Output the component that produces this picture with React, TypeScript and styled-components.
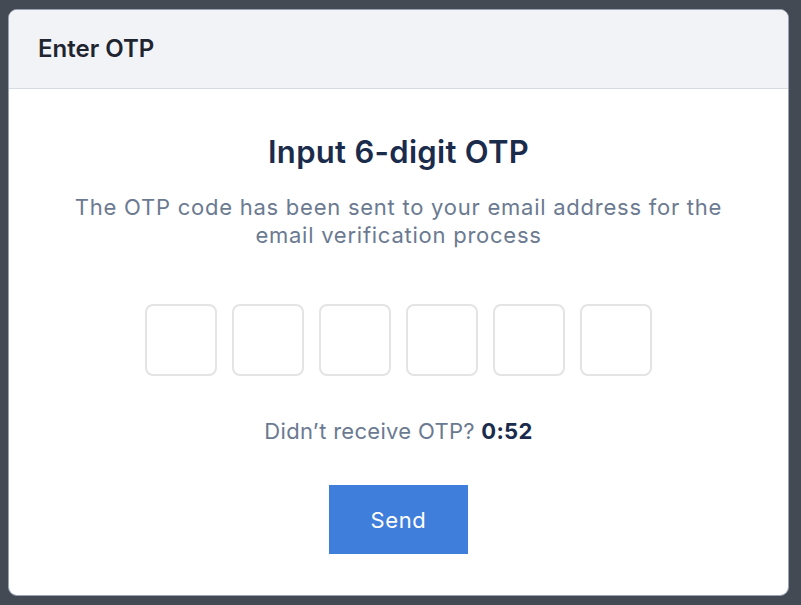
import React from "react";
import styled, { createGlobalStyle } from "styled-components";

const Global = createGlobalStyle`
  html, body { margin: 0; padding: 0; background: #434a54; }
  body { font-family: "Inter", "Noto Sans", sans-serif; }
  * { box-sizing: border-box; }
`;

const Page = styled.div`
  width: 801px;
  height: 605px;
  padding: 9px 12px 9px 8px;
  background: #434a54;
`;

const Card = styled.div`
  width: 781px;
  height: 587px;
  background: #ffffff;
  border: 1px solid #9aa3b3;
  border-radius: 9px;
  overflow: hidden;
  display: flex;
  flex-direction: column;
`;

const Header = styled.div`
  height: 79px;
  flex: none;
  background: #f2f3f7;
  border-bottom: 1px solid #d6dae1;
  display: flex;
  align-items: center;
  padding-left: 29px;
`;

const HeaderTitle = styled.h2`
  margin: 0;
  font-size: 24px;
  line-height: 30px;
  font-weight: 600;
  color: #1f2530;
`;

const Body = styled.div`
  flex: 1;
  display: flex;
  flex-direction: column;
  align-items: center;
  padding-top: 43px;
`;

const Title = styled.h1`
  margin: 0;
  font-size: 31px;
  line-height: 40px;
  letter-spacing: 0.3px;
  font-weight: 600;
  color: #1a2b4c;
`;

const Subtitle = styled.p`
  margin: 21px 0 0;
  width: 680px;
  text-align: center;
  font-size: 22px;
  line-height: 28px;
  letter-spacing: 0.75px;
  font-weight: 400;
  color: #6b7a91;
`;

const OtpRow = styled.div`
  display: flex;
  gap: 15px;
  margin-top: 55px;
`;

const OtpBox = styled.input`
  width: 72px;
  height: 72px;
  border: 2px solid #e4e4e4;
  border-radius: 8px;
  background: #fff;
  outline: none;
  text-align: center;
  font-size: 24px;
  font-family: inherit;
`;

const Resend = styled.p`
  margin: 41px 0 0;
  font-size: 22px;
  line-height: 28px;
  letter-spacing: 0.3px;
  color: #6b7a91;
`;

const Timer = styled.span`
  font-weight: 700;
  color: #1a2b4c;
`;

const SendButton = styled.button`
  margin-top: 40px;
  width: 139px;
  height: 69px;
  border: none;
  background: #3f7edb;
  color: #ffffff;
  font-family: inherit;
  font-size: 22px;
  letter-spacing: 0.6px;
  font-weight: 400;
  cursor: pointer;
`;

export default function App() {
  return (
    <>
      <Global />
      <Page>
        <Card>
          <Header>
            <HeaderTitle>Enter OTP</HeaderTitle>
          </Header>
          <Body>
            <Title>Input 6-digit OTP</Title>
            <Subtitle>
              The OTP code has been sent to your email address for the email verification process
            </Subtitle>
            <OtpRow>
              {Array.from({ length: 6 }).map((_, i) => (
                <OtpBox key={i} maxLength={1} aria-label={`Digit ${i + 1}`} />
              ))}
            </OtpRow>
            <Resend>
              Didn’t receive OTP? <Timer>0:52</Timer>
            </Resend>
            <SendButton>Send</SendButton>
          </Body>
        </Card>
      </Page>
    </>
  );
}
